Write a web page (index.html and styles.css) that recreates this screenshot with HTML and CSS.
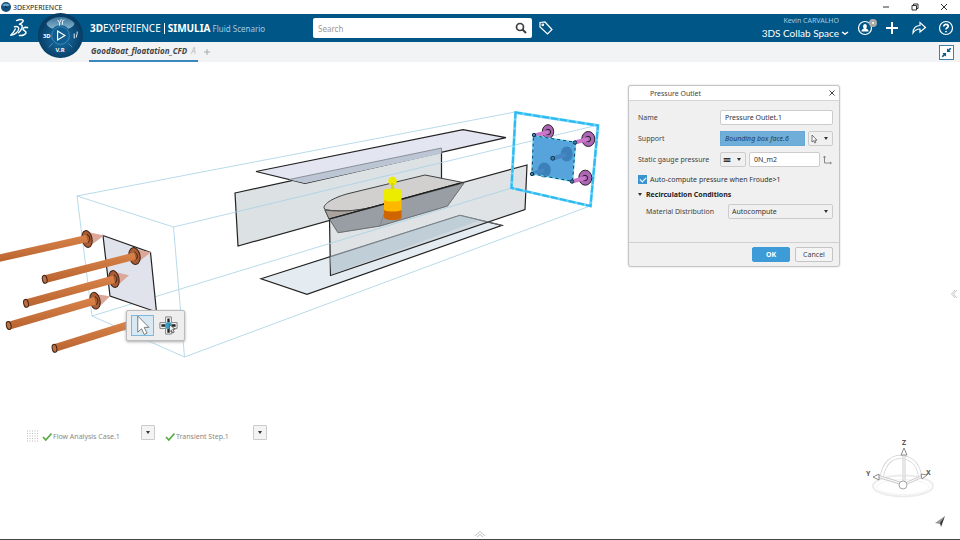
FILE: index.html
```html
<!DOCTYPE html>
<html lang="en">
<head>
  <meta charset="UTF-8">
  <title>3DEXPERIENCE</title>
  <meta name="viewport" content="width=device-width, initial-scale=1.0">
  <link rel="stylesheet" href="styles.css">
</head>
<body>

<!-- WINDOW TITLE -->
<div class="titlebar">
  <svg class="app-icon" viewBox="0 0 10 10"><circle cx="5" cy="5" r="5" fill="#114f7c"/><path d="M1 3a5 4 0 0 1 8 0L5 5z" fill="#6fa5c8"/><path d="M4 3.500l3 1.500-3 1.500z" fill="#0b3658"/></svg>
  <span>3DEXPERIENCE</span>
  <div class="window-buttons">
    <button aria-label="Minimize"><svg viewBox="0 0 8 8"><path d="M1 4h6"/></svg></button>
    <button aria-label="Restore"><svg viewBox="0 0 8 8"><path d="M1 2.500h4.500V7H1zM2.500 2.500V1H7v4.500H5.500"/></svg></button>
    <button aria-label="Close"><svg viewBox="0 0 8 8"><path d="M1 1l6 6M7 1L1 7"/></svg></button>
  </div>
</div>

<!-- TOP BAR -->
<header class="topbar">
  <div class="brand">
    <svg class="ds-logo" viewBox="0 0 20 20" fill="none" stroke="#fff" stroke-linecap="round" stroke-linejoin="round"><path d="M7.500 2.600c2.500-1 5.500-1.300 6.500-.4 1 1-1.500 3-3.500 4 2.500 0 3.200 1.800 2.300 4-.8 2-2 3.500-3.300 4.600" stroke-width="1.400"/><path d="M5.500 8.800c3-.8 4.500.2 4.200 2.200-.5 3-4 6-8 6.300 1.300-1 3.500-4 4.600-6.300" stroke-width="1.400"/><path d="M18.500 9.600c-2.200-.6-4.600 0-4.500 1.500.1 1.400 3.400 1.900 3 3.700-.5 2-3.800 3-6.500 2.700" stroke-width="1.600"/></svg>
    <button class="compass" aria-label="Compass">
      <svg viewBox="0 0 48 48">
        <defs>
          <radialGradient id="ball" cx=".5" cy=".55" r=".5"><stop offset="0" stop-color="#1b74a8"/><stop offset=".55" stop-color="#0e5585"/><stop offset="1" stop-color="#083c63"/></radialGradient>
          <linearGradient id="shine" x1="0" y1="0" x2="0" y2="1"><stop offset="0" stop-color="#3b7499"/><stop offset="1" stop-color="#84b3cf"/></linearGradient>
        </defs>
        <circle cx="24" cy="24" r="23" fill="url(#ball)"/>
        <path d="M10 11a19 18 0 0 1 28 0c1 2-2 5-6 6a11 11 0 0 0-16 0c-4-1-7-4-6-6z" fill="url(#shine)"/>
        <circle cx="24" cy="24" r="9" fill="#0f5c90" stroke="#3d88b6"/>
        <path d="M12 36l4-4M36 36l-4-4" stroke="#4f93bd"/>
        <path d="M21 19.500v9l7.500-4.500z" fill="none" stroke="#fff" stroke-width="1.200"/>
        <text x="6" y="26.500">3D</text>
        <text x="19" y="40.500">V.R</text>
        <path d="M21 8l2 3 2-4M23 11v3M26 13V9l2-1M38 22v5M41 20v2l-1 4" stroke="#e8f2f8" fill="none"/>
      </svg>
    </button>
    <div class="brand-name"><b>3D</b>EXPERIENCE<i></i><b>SIMULIA</b><small>Fluid Scenario</small></div>
  </div>
  <div class="search">
    <input type="text" placeholder="Search" aria-label="Search">
    <button aria-label="Run search"><svg viewBox="0 0 12 12" fill="none" stroke="#3c3c3c"><circle cx="5" cy="5" r="3.500" stroke-width="1.700"/><path d="M7.500 7.500L11 11" stroke-width="2"/></svg></button>
  </div>
  <button class="icon-button" aria-label="Tags"><svg viewBox="0 0 16 16"><path d="M2 2.500L7 2l7 7.500-4.500 4.500L2 7z"/><circle cx="4.800" cy="4.800" r=".8"/></svg></button>
  <div class="account">
    <span class="user">Kevin CARVALHO</span>
    <button class="space">3DS Collab Space <svg viewBox="0 0 8 6"><path d="M1 2l3 2 3-2"/></svg></button>
  </div>
  <nav class="actions">
    <button class="icon-button profile" aria-label="Profile"><svg viewBox="0 0 16 16"><circle cx="8" cy="8" r="6.500"/><path d="M4.500 11.500c0-2 1-2.500 2.500-3C5.500 7 6 4 8 4s2.500 3 1 4.500c1.500.5 2.500 1 2.500 3z" fill="#fff" stroke="none"/></svg><span class="badge"></span></button>
    <button class="icon-button" aria-label="Add"><svg viewBox="0 0 16 16"><path d="M8 2v12M2 8h12" stroke-width="2"/></svg></button>
    <button class="icon-button" aria-label="Share"><svg viewBox="0 0 16 16"><path d="M2 13c0-5 3-7.500 7-7.500V2.500L14.500 7.500 9 12V9c-3 0-5 1-7 4z"/></svg></button>
    <button class="icon-button" aria-label="Help"><svg viewBox="0 0 16 16"><circle cx="8" cy="8" r="6.500"/><path d="M5.800 6.500c0-3 4.400-2.600 4.400-.3C10.200 7.800 8 7.800 8 9.500M8 11v1.300" stroke-width="1.700"/></svg></button>
  </nav>
</header>

<!-- TABS -->
<div class="tabbar">
  <a class="tab" href="#">GoodBoat_floatation_CFD <span>A</span></a>
  <button class="new-tab" aria-label="New tab"><svg viewBox="0 0 8 8"><path d="M4 1v6M1 4h6"/></svg></button>
  <button class="collapse" aria-label="Exit full screen"><svg viewBox="0 0 14 14"><path d="M7.500 6.500V2.500l1.300 1.300L11 1.800l1.200 1.200-2 2.200 1.300 1.300zM6.500 7.500H2.500l1.300 1.300L1.800 11 3 12.200l2.200-2 1.300 1.300z"/></svg></button>
</div>

<main class="workspace">
  <!-- 3D view -->
  <svg class="scene" viewBox="0 62 960 477">
    <defs>
      <linearGradient id="rod" x1="0" y1="0" x2=".1" y2="1"><stop offset=".2" stop-color="#d68048"/><stop offset="1" stop-color="#b8622f"/></linearGradient>
    </defs>

    <!-- planes -->
    <g class="plane">
      <path d="M235 193l206.500-45v41L238 246z" fill="#dce1e4"/>
      <path d="M256 171.500L463 129.700l43 8L305 183.300z" fill="#e3e5f1"/>
      <path d="M261 278.700l199-63.400 42 10-195 69z" fill="#e4ecf1"/>
    </g>
    <path d="M289 179.500L441.500 148v5.500L305 183.300z" fill="#bcc5d3"/>
    <path d="M289 179.500L441.500 148v5.500" class="soft-line"/>

    <!-- boat -->
    <path d="M324 207.700c0-4 9-10 24-14l77-18.700 39 7.700-34 8.500-60 16.500c-16 4-30 4-45 2z" fill="#d2d0cf" stroke="#3e4143"/>
    <path d="M325 210c15 2 29 2 45-2.300L464 183l-16.500 23L380 226l-42 6.700-9-14z" fill="#9b9fa4" stroke="#5d6163"/>
    <path d="M325 210c15 2 29 1 45-2.300L329 219z" fill="#aaa39e" stroke="#4d4d4d"/>

    <!-- front plane lies over the hull -->
    <path d="M329.500 219L527 165l-2 44.500-194.500 66z" fill="#c4cccf" fill-opacity=".55" stroke="#222" stroke-width="1.200"/>
    <path d="M330 257l130-41.700 20 5-149 54.500z" fill="#b5c7d2" fill-opacity=".65"/>
    <path d="M330 257l130-41.700 42 10" class="soft-line"/>
    <path d="M329.500 219L464 183l-16.500 23L380 226l-42 6.700z" fill="#8b9095" fill-opacity=".65" stroke="#64686a" stroke-width=".8"/>
    <path d="M380 226l4-12" class="soft-line"/>
    <path d="M329.500 219L460 183.200" stroke="#1e1e1e" stroke-width="1.200"/>

    <!-- mass marker -->
    <g>
      <path d="M384 210h17.500v8c-3 3-14 3-17.500 0z" fill="#cf6500"/>
      <path d="M384 200h17.500v10c-4 2-14 2-17.500 0z" fill="#ffb800"/>
      <path d="M384 190c3-2 14-2 17.500 0v10c-4 2-14 2-17.500 0z" fill="#ecec00"/>
      <circle cx="392.500" cy="181" r="4.300" fill="#ecec00"/>
      <path d="M392.500 183v6" stroke="#d9d900" stroke-width="3"/>
    </g>

    <!-- bounding box -->
    <g class="box-lines">
      <path d="M77 196l96.500 31 11 130L92 316z"/>
      <path d="M77 196l438-84M173.500 227L598 125M184.500 357L590 206M92 316l419.500-128"/>
    </g>

    <!-- outlet face -->
    <path d="M515.500 112.500L598 125.500l-7.500 80.500-79-18z" fill="none" stroke="#6fd6fa" stroke-width="2.800"/>
    <path d="M515.500 112.500L598 125.500l-7.500 80.500-79-18z" fill="none" stroke="#2db8f0" stroke-width="2" stroke-dasharray="7 2"/>
    <g fill="#ad66b3" stroke="#292029">
      <ellipse cx="548" cy="131.700" rx="5.700" ry="7"/>
      <ellipse cx="588.300" cy="139" rx="6.500" ry="7.500"/>
      <ellipse cx="585.300" cy="177.700" rx="6.500" ry="7.500"/>
      <circle cx="548" cy="132" r="2.700"/>
      <circle cx="588" cy="139" r="2.700"/>
      <circle cx="585" cy="178" r="2.700"/>
    </g>
    <path d="M535 135.500l13-3.500M575 142.500l13-3.500M572 181.500l13-3.500" stroke="#cb78cb" stroke-width="4"/>
    <path d="M533.500 135.700l42 6.600-3 39-40.500-7.600z" fill="#57a3dc"/>
    <g fill="#3d7fb9">
      <ellipse cx="566.700" cy="154" rx="6" ry="7.500"/>
      <ellipse cx="544.300" cy="170" rx="6.500" ry="7.500"/>
    </g>
    <path d="M553 158.500l13-4M532 174l12-4" stroke="#4687c3" stroke-width="4"/>
    <path d="M533.500 135.700l42 6.600-3 39-40.500-7.600z" fill="none" stroke="#5dcaf2" stroke-width="1.500"/>
    <path d="M533.500 135.700l42 6.600-3 39-40.500-7.600z" fill="none" stroke="#173e5c" stroke-dasharray="3 3"/>
    <g fill="#3d80a8" stroke="#123049">
      <circle cx="534" cy="135" r="1.700"/><circle cx="575" cy="142.500" r="1.700"/><circle cx="572" cy="181.500" r="1.700"/><circle cx="532" cy="174" r="1.700"/><circle cx="552.700" cy="158.300" r="1.900"/>
    </g>

    <!-- inlet face and arrows -->
    <path d="M103 235.500l47.500 17 6 59.500-46.500-16z" fill="#e0e3eb" stroke="#222" stroke-width="1.200"/>
    <g fill="#dba799">
      <path d="M88 232l16 3.500L90 246z"/><path d="M135 249l16 3.300L137 263z"/><path d="M115 272l14 3.300L117 286z"/><path d="M95 294l15 2.300L98 308z"/>
    </g>
    <g fill="#a95b32" stroke="#3b2216">
      <ellipse cx="87" cy="239" rx="5" ry="8.500" transform="rotate(-12 87 239)"/>
      <ellipse cx="134.500" cy="256" rx="5.500" ry="8.500" transform="rotate(-12 134.500 256)"/>
      <ellipse cx="114" cy="279" rx="5" ry="8.500" transform="rotate(-12 114 279)"/>
      <ellipse cx="95" cy="300.700" rx="5" ry="8.500" transform="rotate(-12 95 300.700)"/>
    </g>
    <g fill="url(#rod)">
      <path d="M-1 254.500L86 235l2 7-89 20z"/>
      <path d="M43.500 275.500L134 252.500l2 7-90 23.500z"/>
      <path d="M25 299.500L113 275.500l2 7.500-88 24z"/>
      <path d="M7.500 322L94 297l2 7.500-86 25z"/>
      <path d="M53 344.500l75-23.500v8l-73 23z"/>
    </g>
    <g fill="none" stroke="#3b2216">
      <path d="M87 234.500c3 1 4 6 1 8M134.500 252c3 1 4 6 1 8M114 275c3 1 4 6 1 8M95 296.700c3 1 4 6 1 8"/>
    </g>
    <g fill="#bd7044" stroke="#402010">
      <ellipse cx="44.700" cy="279.300" rx="2.300" ry="4" transform="rotate(-12 44.700 279.300)"/>
      <ellipse cx="26" cy="303.300" rx="2.300" ry="4" transform="rotate(-12 26 303.300)"/>
      <ellipse cx="8.700" cy="325.500" rx="2.300" ry="4" transform="rotate(-12 8.700 325.500)"/>
      <ellipse cx="54.500" cy="348.300" rx="2.300" ry="4" transform="rotate(-12 54.500 348.300)"/>
    </g>
  </svg>

  <div class="mini-toolbar">
    <button class="selected" aria-label="Select"><svg viewBox="0 0 20 20"><path d="M5 0v17l4-3.500 2.800 6 3-1.500-3-6h5z" fill="#fff" stroke="#777"/></svg></button>
    <button aria-label="Manipulate"><svg viewBox="0 0 20 20"><path d="M7 1h6v6h6v6h-6v6H7v-6H1V7h6z" fill="#fff" stroke="#777"/><path d="M10 2.500v15M2.500 10h15" stroke="#222" stroke-width="2.500" stroke-dasharray="4 7"/><circle cx="10" cy="10" r="3.800" fill="#3c9dc4"/><path d="M11 9v8l2-2 1.500 3 1.500-1-1.500-3H17z" fill="#eee" stroke="#444" stroke-width=".8"/></svg></button>
  </div>

  <!-- PRESSURE OUTLET -->
  <form class="dialog" onsubmit="return false">
    <div class="dialog-title">
      <span>Pressure Outlet</span>
      <button type="button" aria-label="Close dialog"><svg viewBox="0 0 8 8"><path d="M1.500 1.500l5 5M6.500 1.500l-5 5"/></svg></button>
    </div>
    <div class="dialog-body">
      <div class="row">
        <label for="name">Name</label>
        <input class="field" type="text" id="name" value="Pressure Outlet.1">
      </div>
      <div class="row">
        <label for="support">Support</label>
        <input class="field support" type="text" id="support" value="Bounding box face.6" readonly>
        <button type="button" class="picker" aria-label="Selection mode"><svg viewBox="0 0 8 10"><path d="M2 1v7l1.500-1.300L4.800 9l1-.5-1-2.300H7z" fill="#fff" stroke="#555" stroke-width=".8"/></svg><span class="arrow"></span></button>
      </div>
      <div class="row">
        <label for="pressure">Static gauge pressure</label>
        <div class="select-box operator"><select aria-label="Operator"><option>=</option></select><span class="arrow"></span></div>
        <input class="field" type="text" id="pressure" value="0N_m2">
        <svg class="axis-icon" viewBox="0 0 10 10"><path d="M1.500 1v7H8M.5 2.500L1.500 1l1 1.500M7 7l1.500 1L7 9"/></svg>
      </div>
      <div class="check-row">
        <input type="checkbox" id="froude" checked>
        <label for="froude">Auto-compute pressure when Froude&gt;1</label>
      </div>
      <h2><span class="arrow"></span>Recirculation Conditions</h2>
      <div class="row nested">
        <label for="material">Material Distribution</label>
        <div class="select-box"><select id="material"><option>Autocompute</option></select><span class="arrow"></span></div>
      </div>
    </div>
    <div class="dialog-footer">
      <button type="submit" class="primary">OK</button>
      <button type="button">Cancel</button>
    </div>
  </form>

  <button class="side-handle" aria-label="Open side panel"><svg viewBox="0 0 8 10"><path d="M5 1L1.500 5 5 9M7 1L3.500 5 7 9"/></svg></button>

  <!-- cases and steps -->
  <div class="case-strip">
    <svg class="grip" viewBox="0 0 12 12"><path d="M0 1h12M0 3.500h12M0 6h12M0 8.500h12M0 11h12" stroke="#bbb" stroke-dasharray="1 1.500"/></svg>
    <div class="case">
      <svg class="check" viewBox="0 0 10 10"><path d="M1 5l2.800 3L9.500 1.500"/></svg><span>Flow Analysis Case.1</span>
      <button aria-label="Choose case"><span class="arrow"></span></button>
    </div>
    <div class="case">
      <svg class="check" viewBox="0 0 10 10"><path d="M1 5l2.800 3L9.500 1.500"/></svg><span>Transient Step.1</span>
      <button aria-label="Choose step"><span class="arrow"></span></button>
    </div>
  </div>

  <button class="bottom-handle" aria-label="Open action bar"><svg viewBox="0 0 12 8"><path d="M1 6l5-4.500L11 6M3 7l3-2.500L9 7"/></svg></button>

  <!-- axis robot -->
  <svg class="robot" viewBox="0 0 80 90" fill="none">
    <ellipse cx="38" cy="49" rx="30" ry="10.500" stroke="#ececec" stroke-width="2"/>
    <ellipse cx="38" cy="50" rx="26" ry="7.500" stroke="#f3f3f3"/>
    <path d="M17 39c2-12 9-19 18-19s18 5 20 19" stroke="#d0d0d0" stroke-width="4"/>
    <path d="M17 39c2-12 9-19 18-19s18 5 20 19" stroke="#fff" stroke-width="2.500"/>
    <path d="M39 47V18M38 47L12 39M40 47l18-8" stroke="#cdcdcd" stroke-width="3"/>
    <path d="M39 47V18M38 47L12 39M40 47l18-8" stroke="#fff"/>
    <path d="M39 11l3 7h-6zM8 40l6-3v6zM62 38l-6-1 1 5z" fill="#fff" stroke="#8b8b8b"/>
    <circle cx="38" cy="48" r="4" fill="#fff" stroke="#a8a8a8"/>
    <text x="37" y="8">Z</text><text x="1" y="39">Y</text><text x="61" y="38">X</text>
    <path d="M80 79l-10 7 5 1z" fill="#999"/><path d="M80 79l-4 11-1-4z" fill="#333"/>
  </svg>
</main>

</body>
</html>
```
FILE: styles.css
```css
* {
  box-sizing: border-box;
}

body {
  display: flex;
  flex-direction: column;
  min-height: 100vh;
  margin: 0;
  font-family: "Noto Sans", "Open Sans", sans-serif;
  font-size: 7px;
  color: #444;
  background-color: #fff;
}

button {
  display: flex;
  align-items: center;
  justify-content: center;
  padding: 0;
  border: none;
  background: none;
  color: inherit;
  font: inherit;
  cursor: pointer;
}

svg {
  display: block;
  flex: none;
}

/* window title */
.titlebar {
  display: flex;
  align-items: center;
  height: 14px;
  padding-left: 1px;
  color: #222;
}

.app-icon {
  width: 10px;
  height: 10px;
  margin-right: 2px;
}

.window-buttons {
  display: flex;
  gap: 21px;
  margin-left: auto;
  padding-right: 12px;
}

.window-buttons svg {
  width: 8px;
  height: 8px;
  fill: none;
  stroke: #333;
}

/* top bar */
.topbar {
  display: flex;
  align-items: center;
  height: 28px;
  padding: 0 6px 0 9px;
  background-color: #005686;
  color: #fff;
}

.brand {
  position: relative;
  display: flex;
  align-items: center;
  flex: 0 0 304px;
}

.ds-logo {
  width: 20px;
  height: 20px;
}

.compass {
  position: absolute;
  left: 28px;
  top: -6px;
  z-index: 2;
}

.compass svg {
  width: 47px;
  height: 47px;
}

.compass text {
  fill: #fff;
  font-size: 6px;
  font-weight: bold;
}

.brand-name {
  display: flex;
  align-items: center;
  margin-left: 61px;
  font-size: 10px;
}

.brand-name i {
  width: 1px;
  height: 11px;
  margin: 0 3px;
  background-color: #fff;
}

.brand-name small {
  margin-left: 2px;
  font-size: 8px;
  color: #a5cbe0;
}

.search {
  display: flex;
  align-items: center;
  flex: 0 1 219px;
  height: 20px;
  padding: 0 5px;
  border-radius: 2px;
  background-color: #fff;
}

.search input {
  flex: 1;
  min-width: 0;
  padding: 0;
  border: none;
  outline: none;
  font: inherit;
  font-size: 8px;
}

.search input::placeholder {
  color: #999;
}

.search svg {
  width: 12px;
  height: 12px;
}

.icon-button svg {
  width: 16px;
  height: 16px;
  fill: none;
  stroke: #fff;
  stroke-width: 1.2;
}

.search + .icon-button {
  margin-left: 6px;
}

.account {
  display: flex;
  flex-direction: column;
  align-items: flex-end;
  margin-left: auto;
}

.user {
  margin-right: 10px;
  color: #a5cbe0;
  line-height: 10px;
}

.space {
  gap: 2px;
  font-family: Lato, sans-serif;
  font-size: 10px;
  line-height: 14px;
}

.space svg {
  width: 8px;
  height: 6px;
  fill: none;
  stroke: #fff;
  stroke-width: 1.5;
}

.actions {
  display: flex;
  gap: 11px;
  margin-left: 8px;
}

.profile {
  position: relative;
}

.badge {
  position: absolute;
  right: -4px;
  top: -1px;
  width: 8px;
  height: 8px;
  border: 3px solid #aaa;
  border-radius: 50%;
  background-color: #fff;
}

/* tabs */
.tabbar {
  display: flex;
  align-items: center;
  height: 20px;
  padding: 0 6px 0 89px;
  background-color: #f1f3f5;
}

.tab {
  height: 19px;
  padding: 0 2px;
  border-bottom: 2px solid #3b88bd;
  color: #444;
  font-size: 8px;
  font-weight: bold;
  font-style: italic;
  line-height: 16px;
  text-decoration: none;
}

.tab span {
  margin-left: 2px;
  color: #bbb;
  font-weight: normal;
}

.new-tab {
  margin-left: 5px;
}

.new-tab svg {
  width: 8px;
  height: 8px;
  stroke: #aaa;
}

.collapse {
  width: 15px;
  height: 15px;
  margin-left: auto;
  border: 1px solid #3f7fa6;
  background-color: #fff;
}

.collapse svg {
  width: 13px;
  height: 13px;
  fill: #075a8a;
}

/* workspace */
.workspace {
  position: relative;
  flex: 1;
  overflow: hidden;
  border-bottom: 1px solid #444;
}

.scene {
  width: 100%;
  height: auto;
}

.plane {
  stroke: #222;
  stroke-width: 1.2;
}

.soft-line {
  fill: none;
  stroke: #777f88;
  stroke-width: 0.8;
}

.box-lines {
  fill: none;
  stroke: #a6d1e4;
  stroke-width: 0.8;
}

.mini-toolbar {
  position: absolute;
  left: 126px;
  top: 248px;
  display: flex;
  gap: 3px;
  padding: 4px;
  border: 1px solid #bbb;
  border-radius: 2px;
  background-color: #eee;
  box-shadow: 0 1px 3px #aaa;
}

.mini-toolbar button {
  width: 23px;
  height: 21px;
}

.mini-toolbar .selected {
  border: 1px solid #7db8dc;
  background-color: #d9e9f4;
}

.mini-toolbar svg {
  width: 19px;
  height: 19px;
}

/* dialog */
.dialog {
  position: absolute;
  left: 628px;
  top: 23px;
  width: 212px;
  border: 1px solid #c3c6c8;
  border-radius: 3px;
  background-color: #f0f0f0;
  box-shadow: 0 0 2px #ccc;
}

.dialog-title {
  display: flex;
  align-items: center;
  justify-content: space-between;
  height: 15px;
  padding: 0 3px 0 21px;
  border-bottom: 1px solid #d5d5d5;
  border-radius: 3px 3px 0 0;
  background-color: #fff;
}

.dialog-title svg {
  width: 8px;
  height: 8px;
  stroke: #444;
}

.dialog-body {
  display: flex;
  flex-direction: column;
  padding: 9px 6px 23px 9px;
}

.row {
  display: flex;
  align-items: center;
  gap: 3px;
  height: 15px;
  margin-bottom: 6px;
}

.row label {
  flex: 0 0 79px;
  white-space: nowrap;
}

.row.nested {
  margin: 0;
}

.nested label {
  padding-left: 8px;
  flex-basis: 87px;
}

.field,
.picker,
.select-box {
  height: 15px;
  border: 1px solid #ccc;
  border-radius: 2px;
}

.field {
  flex: 1;
  min-width: 0;
  padding: 0 4px;
  background-color: #fff;
  color: #333;
  font: inherit;
}

.support {
  border-color: #6aa8d4;
  border-radius: 0;
  background-color: #70aeda;
  color: #1d3c55;
  font-style: italic;
}

.picker {
  justify-content: space-between;
  width: 25px;
  padding: 0 4px 0 1px;
}

.picker svg {
  width: 8px;
  height: 10px;
}

.arrow {
  flex: none;
  border: 2px solid transparent;
  border-top: 3px solid #333;
  border-bottom: none;
}

.select-box {
  position: relative;
  display: flex;
  flex: 1;
  align-items: center;
}

.select-box select {
  width: 100%;
  height: 100%;
  padding: 0 3px;
  border: none;
  background: none;
  appearance: none;
  color: #333;
  font: inherit;
}

.select-box .arrow {
  position: absolute;
  right: 4px;
  pointer-events: none;
}

.operator {
  flex: 0 0 26px;
}

.operator select {
  padding: 0 2px;
  font-size: 14px;
  font-weight: bold;
  line-height: 13px;
}

.axis-icon {
  width: 10px;
  height: 10px;
  fill: none;
  stroke: #888;
}

.check-row {
  display: flex;
  align-items: center;
  gap: 3px;
  height: 12px;
  color: #333;
}

.check-row input {
  display: grid;
  place-items: center;
  width: 9px;
  height: 9px;
  margin: 0;
  appearance: none;
  border: 1px solid #3b94cf;
  background-color: #fff;
}

.check-row input:checked {
  background-color: #3b94cf;
}

.check-row input:checked::before {
  content: "";
  width: 5px;
  height: 3px;
  border: solid #fff;
  border-width: 0 0 1px 1px;
  transform: rotate(-45deg);
}

.dialog h2 {
  display: flex;
  align-items: center;
  gap: 4px;
  height: 19px;
  margin: 0;
  color: #222;
  font-size: 7px;
}

.dialog-footer {
  display: flex;
  justify-content: flex-end;
  gap: 5px;
  padding: 4px 6px;
  border-top: 1px solid #d0d0d0;
}

.dialog-footer button {
  width: 38px;
  height: 15px;
  border: 1px solid #c4c4c4;
  border-radius: 2px;
  background-color: #f4f4f4;
}

.dialog-footer .primary {
  border-color: #3d9bd8;
  background-color: #3d9bd8;
  color: #fff;
  font-weight: bold;
}

.side-handle {
  position: absolute;
  right: 2px;
  top: 227px;
}

.side-handle svg {
  width: 8px;
  height: 10px;
  fill: none;
  stroke: #c5c5c5;
}

.bottom-handle {
  position: absolute;
  left: 50%;
  bottom: 1px;
  transform: translateX(-50%);
}

.bottom-handle svg {
  width: 12px;
  height: 8px;
  fill: none;
  stroke: #c0c0c0;
}

/* cases and steps */
.case-strip {
  position: absolute;
  left: 27px;
  bottom: 97px;
  display: flex;
  align-items: flex-end;
  color: #888;
}

.grip {
  width: 12px;
  height: 12px;
  margin-right: 3px;
}

.case {
  display: flex;
  align-items: flex-end;
  gap: 1px;
  width: 113px;
  margin-right: 10px;
  line-height: 10px;
}

.case button {
  width: 14px;
  height: 15px;
  margin: 0 0 2px auto;
  border: 1px solid #ccc;
  border-radius: 1px;
  background-color: #f3f3f3;
}

.case:last-child {
  width: 102px;
}

.check {
  width: 10px;
  height: 10px;
  fill: none;
  stroke: #5bab48;
  stroke-width: 1.8;
}

.robot {
  position: absolute;
  right: 15px;
  bottom: 12px;
  width: 80px;
  height: 90px;
}

.robot text {
  fill: #555;
  font-size: 7px;
  font-weight: bold;
}
```
